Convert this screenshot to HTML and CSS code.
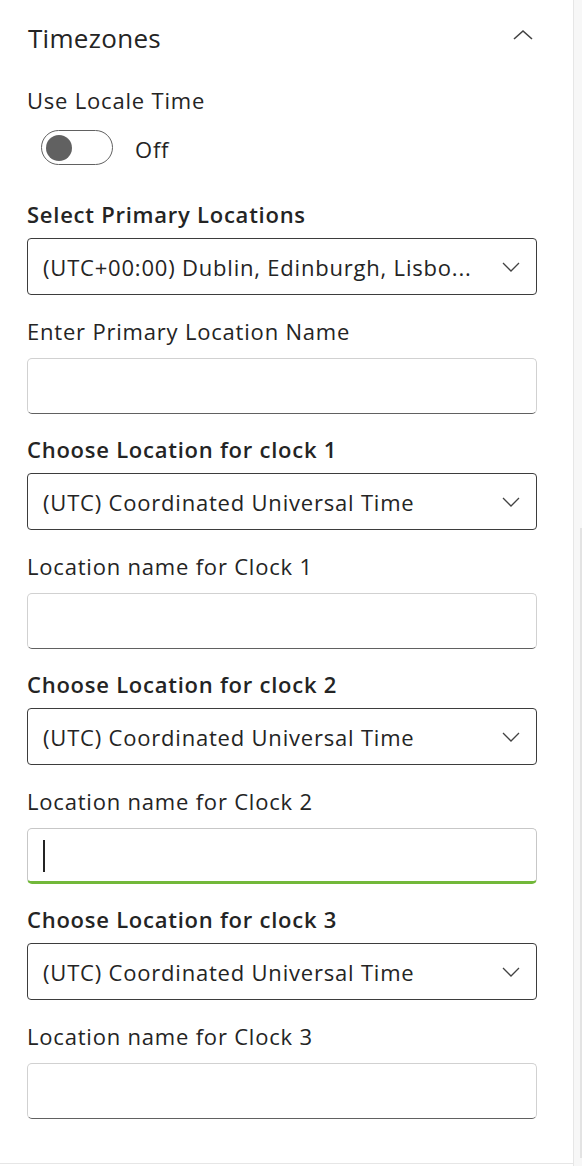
FILE: index.html
```html
<!DOCTYPE html>
<html lang="en">
<head>
<meta charset="utf-8">
<title>Timezones</title>
<link rel="stylesheet" href="styles.css">
</head>
<body>
<div class="frame">
  <div class="panel">
    <div class="header">
      <span class="title">Timezones</span>
      <svg class="chev-up" width="20" height="12" viewBox="0 0 20 12"><polyline points="1,10 10,2 19,10" fill="none" stroke="#424242" stroke-width="1.6"/></svg>
    </div>
    <div class="label first">Use Locale Time</div>
    <div class="switch-row">
      <span class="switch"><span class="knob"></span></span>
      <span class="switch-text">Off</span>
    </div>

    <div class="label bold after-switch">Select Primary Locations</div>
    <div class="dropdown"><span class="dd-text">(UTC+00:00) Dublin, Edinburgh, Lisbo...</span><svg class="chev" width="18" height="10" viewBox="0 0 18 10"><polyline points="1,1 9,9 17,1" fill="none" stroke="#424242" stroke-width="1.3"/></svg></div>
    <div class="label">Enter Primary Location Name</div>
    <div class="input"></div>

    <div class="label bold">Choose Location for clock 1</div>
    <div class="dropdown"><span class="dd-text">(UTC) Coordinated Universal Time</span><svg class="chev" width="18" height="10" viewBox="0 0 18 10"><polyline points="1,1 9,9 17,1" fill="none" stroke="#424242" stroke-width="1.3"/></svg></div>
    <div class="label">Location name for Clock 1</div>
    <div class="input"></div>

    <div class="label bold">Choose Location for clock 2</div>
    <div class="dropdown"><span class="dd-text">(UTC) Coordinated Universal Time</span><svg class="chev" width="18" height="10" viewBox="0 0 18 10"><polyline points="1,1 9,9 17,1" fill="none" stroke="#424242" stroke-width="1.3"/></svg></div>
    <div class="label">Location name for Clock 2</div>
    <div class="input focused"><span class="caret"></span></div>

    <div class="label bold">Choose Location for clock 3</div>
    <div class="dropdown"><span class="dd-text">(UTC) Coordinated Universal Time</span><svg class="chev" width="18" height="10" viewBox="0 0 18 10"><polyline points="1,1 9,9 17,1" fill="none" stroke="#424242" stroke-width="1.3"/></svg></div>
    <div class="label">Location name for Clock 3</div>
    <div class="input"></div>
  </div>
  <div class="scrollbar"><div class="thumb"></div></div>
</div>
</body>
</html>
```

FILE: styles.css
```css
* { box-sizing: border-box; }
html, body {
  margin: 0;
  padding: 0;
  background: #ffffff;
}
body {
  font-family: "Open Sans", "Noto Sans", sans-serif;
  color: #242424;
  width: 582px;
  height: 1166px;
  overflow: hidden;
}
.frame {
  display: flex;
  height: 1166px;
}
.panel {
  flex: 1;
  padding: 0 36px 0 27px;
  border-bottom: 1px solid #e6e6e6;
  height: 1164px;
}
.header {
  display: flex;
  align-items: center;
  justify-content: space-between;
  height: 38px;
  margin-top: 19px;
  padding-right: 4px;
  padding-left: 1px;
}
.title {
  font-size: 26px;
  letter-spacing: 0.3px;
  line-height: 38px;
}
.chev-up { margin-top: -6px; }
.label {
  font-size: 22px;
  letter-spacing: 0.8px;
  line-height: 30px;
  margin-top: 21px;
  margin-bottom: 12px;
  white-space: nowrap;
}
.label.first {
  margin-top: 28px;
  margin-bottom: 0;
}
.label.bold {
  font-weight: 600;
  letter-spacing: 0.75px;
  margin-top: 20px;
  margin-bottom: 9px;
}
.label.bold.after-switch {
  margin-top: 34px;
}
.switch-row {
  display: flex;
  align-items: center;
  margin-left: 14px;
  margin-top: 15px;
  height: 35px;
}
.switch {
  width: 72px;
  height: 35px;
  border: 1px solid #616161;
  border-radius: 18px;
  display: flex;
  align-items: center;
  padding-left: 4px;
}
.knob {
  width: 26px;
  height: 26px;
  border-radius: 50%;
  background: #616161;
}
.switch-text {
  font-size: 22px;
  letter-spacing: 0.8px;
  margin-left: 22px;
  margin-top: 2px;
}
.dropdown {
  height: 57px;
  border: 1px solid #3d3d3d;
  border-radius: 4px;
  display: flex;
  align-items: center;
  justify-content: space-between;
  padding: 0 16px 0 15px;
  font-size: 22px;
  letter-spacing: 0.8px;
}
.dd-text { white-space: nowrap; overflow: hidden; }
.chev { flex: none; margin-top: 1px; }
.input {
  height: 56px;
  border: 1px solid #d1d1d1;
  border-bottom-color: #616161;
  border-radius: 5px;
  display: flex;
  align-items: center;
  padding-left: 15px;
}
.input.focused {
  border-width: 1px 1px 3px 1px;
  border-style: solid;
  border-color: #c7c7c7 #c7c7c7 #72b83a #c7c7c7;
}
.caret {
  width: 2px;
  height: 32px;
  background: #242424;
  margin-top: 2px;
}
.scrollbar {
  width: 9px;
  height: 1166px;
  background: #f7f7f7;
  border-left: 1px solid #e6e6e6;
  position: relative;
}
.thumb {
  position: absolute;
  left: 6px;
  top: 528px;
  width: 2px;
  height: 630px;
  background: #e3e3e3;
}
```
